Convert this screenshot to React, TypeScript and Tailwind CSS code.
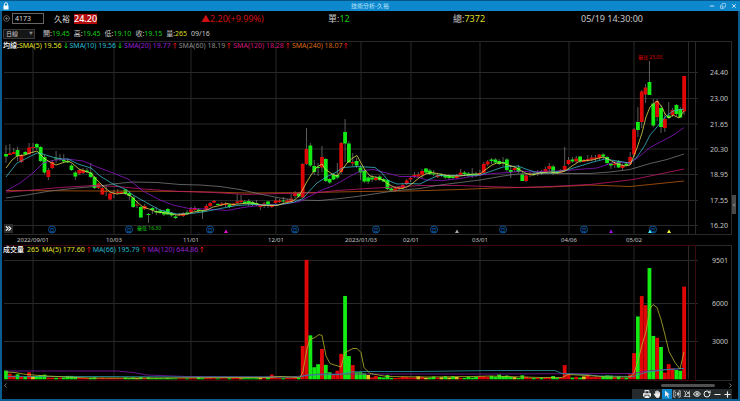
import { ChevronLeft, ChevronRight, ChevronsRight, CirclePlus, Copy, Eye, Minus, Plus, RotateCw, X } from 'lucide-react';
import type { ReactNode } from 'react';

type Candle = [dir: 'u' | 'd', high: number, top: number, bottom: number, low: number, volume: number];
type Point = [number, number];

// u = up (red), d = down (green); prices are already in chart units
const candles: Candle[] = [
  ['d', 145, 154, 156.5, 163, 700], ['u', 144, 153.5, 155, 155, 450], ['u', 148, 152, 154, 154, 300], ['d', 147, 150, 156, 161, 400],
  ['u', 154, 155, 162, 163, 200], ['d', 151, 152, 154.5, 155, 180], ['u', 143, 147.5, 154, 155, 560], ['u', 143, 147, 148, 153, 250],
  ['d', 143, 144, 147.5, 150, 250], ['d', 146, 147, 161, 162, 320], ['d', 155, 157, 172.5, 174, 370], ['u', 168, 170, 177, 180, 140],
  ['u', 160, 162, 168, 169, 130], ['d', 151, 158.5, 159.5, 163, 120], ['d', 154, 158.5, 159.5, 161, 130], ['d', 154, 160, 161.5, 163, 140],
  ['d', 159, 161, 162.5, 163, 270], ['d', 164, 165.5, 170, 171, 270], ['d', 171, 172.5, 176.5, 180, 190], ['u', 169, 170, 173.5, 175, 120],
  ['u', 168, 170, 173, 174, 100], ['d', 168, 170.5, 172, 173, 110], ['d', 163, 172.5, 177, 178, 120], ['d', 176, 177, 188, 189, 160],
  ['u', 183, 183.5, 188, 189, 100], ['u', 186, 188, 194.5, 195, 130], ['u', 185, 191, 192, 196, 90], ['u', 192, 193.5, 199.5, 200, 110],
  ['u', 190, 193, 194, 198, 100], ['u', 189, 192, 193, 194, 90], ['u', 191, 192, 193, 194, 90], ['d', 189, 189.5, 194, 195, 150],
  ['d', 191, 193, 196, 200, 110], ['d', 196, 197.5, 207, 208, 150], ['u', 201, 204.5, 205.5, 208, 90], ['d', 206, 207, 217.5, 218, 170],
  ['u', 204, 206, 209, 210, 100], ['d', 213, 214, 215, 223, 160], ['d', 207, 208, 210, 214, 90], ['d', 207, 211, 212.5, 215, 100],
  ['d', 209, 210.5, 213, 214, 90], ['d', 210, 211.5, 214.5, 216, 80], ['d', 208, 209, 214.5, 215, 110], ['d', 212, 213, 215.5, 217, 80],
  ['d', 215, 216.5, 218, 219, 70], ['u', 213, 214.5, 215.5, 216, 70], ['u', 212, 213, 216, 217, 80], ['d', 210, 212.5, 214, 215, 70],
  ['u', 207, 209.5, 212, 213, 90], ['u', 206, 208, 210, 211, 80], ['d', 208, 209.5, 211, 212, 180], ['d', 210, 210.5, 211.5, 219, 90],
  ['u', 204, 206, 210, 211, 100], ['u', 202, 203, 206, 207, 120], ['u', 200, 201, 202.5, 203, 80], ['d', 203, 204, 205, 205, 70],
  ['u', 202, 203.5, 205, 206, 80], ['u', 202, 203.5, 205, 207, 70], ['d', 204, 204.5, 207, 208, 90], ['u', 203, 203.5, 205.5, 206, 120],
  ['u', 194, 201.5, 203, 204, 110], ['u', 195, 200.5, 202, 203, 80], ['d', 200, 201.5, 203.5, 204, 90], ['d', 199, 201, 203.5, 206, 90],
  ['d', 201, 202, 204.5, 206, 80], ['d', 200, 203, 205, 206, 90], ['u', 205, 205.5, 207, 210, 100], ['u', 202, 203.5, 205, 208, 80],
  ['d', 201, 201.5, 204.5, 208, 150], ['u', 204, 204.5, 207, 208, 380], ['u', 198, 200.5, 203, 204, 160], ['u', 199, 200.5, 202, 203, 110],
  ['d', 197, 200.5, 201.5, 203, 90], ['u', 199, 200.5, 202, 202, 140], ['u', 194, 198.5, 202, 203, 120], ['u', 191, 193, 196, 198, 170],
  ['d', 192, 193, 196.5, 198, 110], ['u', 163, 164, 197.5, 198, 2650], ['u', 128, 149, 164, 165, 9501], ['d', 143, 145.5, 165.5, 167, 3500],
  ['d', 160, 166, 172, 175, 960], ['d', 163, 167, 168, 176, 1200], ['u', 146, 157, 167.5, 172, 2420], ['d', 158, 159, 181, 182, 1150],
  ['d', 178, 179, 182.5, 184, 560], ['d', 173, 175, 179.5, 180, 400], ['d', 163, 175, 177.5, 179, 680], ['u', 142, 143, 172, 174, 2020],
  ['d', 119, 132, 143.5, 162, 6630], ['d', 141, 143.5, 162.5, 163, 1850], ['u', 153, 162, 163.5, 166, 1130], ['d', 158, 161, 165.5, 168, 560],
  ['d', 165, 167.5, 172.5, 180, 560], ['d', 169, 170, 181.5, 183, 470], ['d', 176, 177.5, 181.5, 184, 350], ['d', 175, 177.5, 179.5, 182, 150],
  ['u', 176, 178, 180, 181, 260], ['d', 175, 176.5, 180, 181, 180], ['d', 178, 179, 181.5, 182, 140], ['d', 179, 180, 189, 190, 340],
  ['d', 187, 188.5, 190.5, 191, 110], ['u', 188, 188.5, 191, 192, 100], ['u', 186, 187.5, 189, 191, 120], ['u', 183, 185, 188, 189, 200],
  ['u', 179, 180.5, 184, 185, 180], ['u', 176, 178, 179.5, 182, 130], ['u', 172, 175, 177, 178, 140], ['u', 172, 174.5, 176.5, 177, 240],
  ['u', 169, 171, 175, 178, 190], ['d', 168, 168.5, 172.5, 174, 120], ['d', 169, 170.5, 174, 175, 140], ['d', 170, 173.5, 174.5, 176, 220],
  ['u', 173, 175, 177, 178, 130], ['d', 173, 174.5, 176, 177, 160], ['d', 174, 176, 177.5, 179, 240], ['d', 174, 176, 178, 180, 140],
  ['d', 175, 176.5, 178, 179, 240], ['u', 174, 176, 178, 179, 190], ['u', 169, 172.5, 175, 176, 120], ['d', 171, 172.5, 174, 176, 110],
  ['d', 172, 173.5, 175.5, 177, 190], ['d', 168, 174, 175.5, 178, 130], ['d', 172, 174, 175.5, 177, 190], ['u', 170, 173, 175, 176, 240],
  ['u', 162, 164, 173, 174, 240], ['u', 160, 161.5, 164.5, 166, 190], ['d', 158, 159.5, 161, 164, 270], ['d', 158, 159.5, 162.5, 164, 200],
  ['d', 159, 161, 164, 165, 380], ['d', 157, 162, 163, 166, 260], ['d', 158, 159.5, 170, 172, 300], ['d', 165, 170, 172, 178, 200],
  ['u', 167, 168, 170, 172, 170], ['d', 165, 167.5, 172, 173, 110], ['d', 172, 174.5, 181, 181, 320], ['u', 174, 175.5, 181, 182, 200],
  ['u', 172, 173.5, 175, 177, 120], ['d', 172, 173.5, 175, 176, 100], ['u', 170, 172, 173.5, 176, 110], ['d', 170, 171.5, 173.5, 175, 100],
  ['u', 167, 169, 172, 173, 120], ['u', 163, 166, 169, 171, 130], ['d', 165, 166.5, 173.5, 175, 260], ['d', 171, 171.5, 173, 174, 100],
  ['u', 169, 170, 172.5, 173, 130], ['u', 147, 166, 171, 172, 1130], ['u', 157, 160, 164, 165, 420], ['d', 157, 159.5, 161.5, 163, 140],
  ['u', 156, 158.5, 161.5, 163, 200], ['d', 156, 156.5, 161.5, 163, 140], ['u', 159, 160.5, 162, 162, 230], ['u', 155, 159, 161, 162, 380],
  ['u', 155, 157.5, 159.5, 161, 180], ['u', 155, 157.5, 159, 161, 190], ['u', 154, 154.5, 158, 160, 160], ['d', 153, 154.5, 156.5, 159, 260],
  ['d', 156, 157, 163, 165, 310], ['d', 163, 163.5, 165.5, 169, 290], ['u', 161, 163.5, 165, 168, 140], ['d', 160, 161, 167.5, 168, 220],
  ['u', 164, 165.5, 168, 170, 100], ['d', 162, 163.5, 165.5, 166, 120], ['u', 152, 157, 164, 165, 400], ['u', 128, 129.5, 154.5, 157, 2080],
  ['d', 107, 122, 130, 137, 5000], ['u', 90, 91.5, 122, 128, 6620], ['u', 84, 87.5, 94.5, 103, 5900], ['d', 61, 82, 95, 95, 8850],
  ['d', 99, 103.5, 125.5, 127, 3450], ['u', 99, 101, 117, 121, 3300], ['d', 105, 108, 127, 133, 2570], ['u', 113, 119, 128, 132, 530],
  ['d', 102, 115.5, 118, 119, 1200], ['u', 108, 110, 115, 117, 870], ['d', 104, 105, 114, 116, 740], ['d', 107, 109, 117.5, 118, 680],
  ['u', 76, 76, 111.5, 115, 7372],
];

// bars that are drawn in yellow in the volume panel (price unchanged)
const flatDays = [7, 34, 61, 66, 94, 107, 109, 113, 115, 117, 132, 150];
// sessions whose volume colour runs against the candle body
const redVolume = [14, 21, 85, 86, 95, 172];

const sma5: Point[] = [
  [6, 168], [12, 160], [17, 156], [25, 155], [30, 153], [37, 151], [41, 155], [45, 159], [50, 162], [56, 165], [62, 163], [68, 161], [72, 163],
  [79, 169], [87, 172], [91, 173], [95, 178], [103, 186], [110, 192], [117, 194], [125, 193], [132, 197], [137, 202], [143, 207], [149, 209],
  [157, 212], [167, 213], [177, 215], [188, 214], [191, 212.5], [199, 211], [207, 210], [213, 207], [220, 205.5], [227, 203.5], [233, 204.5],
  [243, 203.5], [253, 203], [263, 205.5], [277, 205.5], [283, 203.5], [293, 201], [299, 196], [303, 189], [307, 181.5], [311, 175], [317, 167],
  [322, 164], [325, 169], [332, 174], [337, 176], [342, 170], [347, 163], [352, 158.5], [357, 155.5], [361, 163], [365, 170], [370, 176],
  [377, 177.5], [383, 180], [388, 184], [395, 187.5], [402, 188.5], [407, 187], [413, 183], [420, 177], [427, 173.5], [432, 172.5], [440, 174],
  [450, 176], [460, 176], [473, 174], [480, 174], [485, 170], [492, 165], [497, 163], [503, 163], [508, 165], [515, 167], [520, 170], [525, 173],
  [532, 175], [540, 173], [550, 172], [557, 173], [565, 171], [572, 166], [580, 161], [592, 160], [603, 157], [610, 160], [617, 164], [625, 166],
  [630, 165], [633, 158], [637, 148], [642, 133], [646, 117], [650, 107], [657, 101], [662, 107], [665, 114], [669, 118], [673, 115], [679, 118], [684, 111],
];
const sma10: Point[] = [
  [6, 177], [17, 163], [25, 159], [37, 153], [43, 154], [52, 157], [62, 159], [68, 159], [78, 164], [91, 168], [100, 176], [113, 184], [125, 189],
  [133, 195], [147, 203], [160, 210], [177, 214], [191, 213.5], [203, 212], [213, 210], [223, 208], [237, 205.5], [253, 204.5], [277, 205],
  [293, 202.5], [303, 198.5], [308, 192.5], [317, 183], [327, 176.5], [335, 173], [343, 167.5], [357, 166.5], [375, 167.5], [382, 173], [388, 180.5],
  [397, 184], [410, 183.5], [420, 184], [428, 180], [438, 175.5], [453, 175.5], [480, 175], [493, 170.5], [503, 167], [518, 166], [527, 169.5],
  [537, 172.5], [550, 173], [567, 170], [580, 166], [593, 162], [605, 159], [617, 161], [630, 163], [637, 157], [645, 145], [650, 135], [657, 127],
  [665, 117], [673, 111], [684, 109],
];
const sma20: Point[] = [
  [6, 191], [20, 183], [33, 173], [43, 163], [55, 160], [67, 159], [83, 161], [97, 167], [113, 173], [128, 179], [143, 191], [160, 200], [173, 205],
  [189, 208.5], [207, 209], [227, 210.5], [243, 207.5], [260, 205.5], [280, 204.5], [300, 201.5], [308, 197], [323, 189.5], [333, 186], [347, 178],
  [360, 171], [373, 169.5], [387, 173], [400, 176.5], [415, 176.5], [427, 180], [443, 180.5], [460, 178.5], [477, 175.5], [493, 173.5], [510, 172.5],
  [520, 171], [533, 172], [550, 171], [563, 171], [577, 169.5], [597, 168], [613, 162.5], [630, 163], [638, 157.5], [650, 147.5], [667, 138.5],
  [675, 134], [684, 127.5],
];
const sma60: Point[] = [
  [6, 198], [27, 195], [50, 191], [77, 188], [100, 186], [117, 183.5], [133, 182], [157, 182.5], [180, 184.5], [200, 185], [220, 186.5], [240, 189.5],
  [260, 194], [277, 197.5], [293, 200], [320, 200.5], [340, 198.5], [357, 196.5], [380, 193], [397, 190.5], [420, 188.5], [440, 185], [460, 182.5],
  [480, 180], [503, 176], [517, 174], [550, 173.5], [570, 173.5], [590, 173.5], [610, 172], [630, 169.5], [650, 163.5], [667, 159.5], [684, 154],
];
const sma120: Point[] = [
  [6, 192], [33, 190], [60, 187.5], [93, 185.5], [117, 186.5], [143, 189], [180, 191.5], [213, 192.5], [247, 194.5], [280, 193.5], [313, 193],
  [337, 190.5], [360, 189], [393, 187], [420, 185.5], [460, 185.5], [487, 186.5], [520, 187.5], [550, 186.5], [590, 184.5], [617, 181.5],
  [633, 179.5], [650, 176], [667, 172.5], [684, 169],
];
const sma240: Point[] = [
  [6, 190.5], [100, 191], [190, 191.5], [247, 193], [313, 192.5], [360, 191.5], [410, 191], [460, 189.5], [493, 188], [550, 187], [590, 185],
  [630, 186.5], [650, 184.5], [684, 181],
];

const volMa5: Point[] = [
  [6, 372], [15, 372.5], [23, 374], [33, 375], [47, 376], [67, 377], [90, 378], [150, 378], [240, 377.5], [267, 377.5], [280, 376.5], [300, 377.5],
  [303, 371.5], [307, 348.5], [310, 339.5], [315, 337.5], [319, 334.5], [322, 335.5], [326, 356], [330, 363.5], [341, 367], [345, 352.5], [349, 350.5],
  [353, 348.5], [357, 348.5], [361, 352.5], [364, 367.5], [370, 373.5], [387, 376.5], [427, 377], [473, 376.5], [490, 376], [540, 377.5], [562, 377.5],
  [568, 374.5], [587, 375.5], [607, 377], [630, 377], [634, 373.5], [638, 360.5], [642, 345], [646, 331.5], [650, 308.5], [653, 304.5], [657, 307.5],
  [661, 319.5], [665, 335], [669, 351.5], [675, 362.5], [680, 369], [684, 352],
];
const volMa66: Point[] = [
  [6, 376.5], [100, 376.5], [190, 377], [300, 377], [307, 375], [340, 374.5], [350, 372], [363, 371.5], [420, 371.5], [490, 370.5], [555, 370.5],
  [562, 373.5], [583, 374.5], [600, 376], [633, 376.5], [647, 372], [667, 369.5], [684, 368.5],
];
const volMa120: Point[] = [
  [6, 371], [117, 371], [133, 372.5], [147, 375], [187, 376.5], [290, 377], [307, 375.5], [320, 374], [490, 374], [633, 373.5], [647, 371], [667, 369.5], [684, 368.5],
];

const dates: [string, number][] = [
  ['2022/09/01', 33], ['10/03', 114], ['11/01', 191], ['12/01', 276], ['2023/01/03', 361], ['02/01', 411], ['03/01', 480], ['04/06', 569], ['05/02', 634],
];
const prices: [string, number][] = [
  ['24.40', 72.5], ['23.00', 98.5], ['21.65', 124], ['20.30', 149], ['18.95', 174.5], ['17.55', 200.5], ['16.20', 225.5],
];
const volumes: [string, number][] = [['9501', 260.5], ['6000', 303.5], ['3000', 341.5]];
const months = [52, 129, 210, 295, 376, 434, 503, 584, 653];
const events: [number, string][] = [[226, '#e010d0'], [457, '#aaaaaa'], [611, '#a010e0'], [650, '#40e0f0'], [669, '#f0f040']];

const xOf = (i: number) => 6 + i * 3.853;
const toPoints = (pts: Point[]) => pts.map((p) => p.join(',')).join(' ');

function Line({ data, color }: { data: Point[]; color: string }) {
  return <polyline points={toPoints(data)} fill="none" stroke={color} strokeWidth={0.8} strokeLinejoin="round" />;
}

function PriceChart() {
  return (
    <svg viewBox="2 41 736 204" className="block w-full" role="img" aria-label="K線圖">
      <g stroke="#292929" strokeWidth={1}>
        <path d="M4 41.5H732M4 234.5H732" />
        {prices.map(([label, y]) => <path key={label} d={`M4 ${y}H698`} />)}
        {dates.map(([label, x]) => <path key={label} d={`M${x} 41V235`} />)}
        <path d="M688.5 41V235M695.5 41V235M731.5 41V235" />
      </g>
      {candles.map(([dir, high, top, bottom, low], i) => (
        <g key={i}>
          <path d={`M${xOf(i)} ${high}V${low}`} stroke="#999" strokeWidth={0.6} />
          <rect x={xOf(i) - 1.9} y={top} width={3.8} height={bottom - top} fill={dir === 'u' ? '#e00606' : '#14ea14'} />
        </g>
      ))}
      <Line data={sma240} color="#b8590b" />
      <Line data={sma120} color="#c0186c" />
      <Line data={sma60} color="#767676" />
      <Line data={sma20} color="#8c14c4" />
      <Line data={sma10} color="#38b4c8" />
      <Line data={sma5} color="#dcd850" />
      <g fontSize={7} fill="#c4c4c4">
        {prices.map(([label, y]) => <text key={label} x={728} y={y + 2.5} textAnchor="end">{label}</text>)}
      </g>
      <g fontSize={6} fill="#c4c4c4" textAnchor="middle">
        {dates.map(([label, x]) => <text key={label} x={x} y={241.5}>{label}</text>)}
      </g>
      {months.map((x) => (
        <g key={x}>
          <circle cx={x} cy={229.5} r={3.5} fill="none" stroke="#0a59a0" strokeWidth={0.9} />
          <text x={x} y={231.5} fontSize={5} fill="#0c6fc8" textAnchor="middle">月</text>
        </g>
      ))}
      {events.map(([x, color]) => <path key={x} d={`M${x} 229.5l2 3.5h-4z`} fill={color} />)}
      <text x={638} y={59} fontSize={5} fill="#d80000">最高 25.00</text>
      <text x={137} y={230} fontSize={5} fill="#10c810">最低 16.30</text>
    </svg>
  );
}

function VolumeChart() {
  return (
    <svg viewBox="2 245 736 136" className="block w-full" role="img" aria-label="成交量">
      <g stroke="#292929" strokeWidth={1}>
        {volumes.map(([label, y]) => <path key={label} d={`M4 ${y}H698`} />)}
        {dates.map(([label, x]) => <path key={label} d={`M${x} 246V379`} />)}
        <path d="M688.5 246V379M731.5 246V380M696 245.5H732M696 380.5H732" />
      </g>
      <path d="M4 245.5H695.5V380.5H4" fill="none" stroke="#3d0a12" />
      {candles.map(([dir, , , , , volume], i) => {
        const h = volume * 0.01257;
        const up = dir === 'u' || redVolume.includes(i);
        return (
          <rect key={i} x={xOf(i) - 1.9} y={379.3 - h} width={3.8} height={h} fill={flatDays.includes(i) ? '#e8c020' : up ? '#e00606' : '#14ea14'} />
        );
      })}
      <Line data={volMa120} color="#7d18a8" />
      <Line data={volMa66} color="#2797a8" />
      <Line data={volMa5} color="#b8b428" />
      <g fontSize={7} fill="#c4c4c4" textAnchor="end">
        {volumes.map(([label, y]) => <text key={label} x={728} y={y + 2.5}>{label}</text>)}
      </g>
    </svg>
  );
}

function Trend({ up }: { up: boolean }) {
  return (
    <svg viewBox="0 0 4 7" className={`h-[7px] w-1 ${up ? 'text-[#e01010]' : 'text-[#10c810]'}`} fill="none" stroke="currentColor" strokeWidth={0.9}>
      <path d={up ? 'M2 6.500V1M0.500 2.500L2 1l1.500 1.500' : 'M2 0.500V6M0.500 4.500L2 6l1.500-1.500'} />
    </svg>
  );
}

function Average({ text, up = true, className }: { text: string; up?: boolean; className: string }) {
  return (
    <span className={`mr-0.5 flex items-center gap-0.5 ${className}`}>
      {text}
      <Trend up={up} />
    </span>
  );
}

function Legend({ children }: { children: ReactNode }) {
  return <div className="absolute left-px top-0 flex h-[9px] items-center whitespace-nowrap text-[7px] leading-[9px]">{children}</div>;
}

function Quote({ label, value, className }: { label: string; value: string; className: string }) {
  return (
    <span className="text-[#c8c8c8]">
      {label}:<span className={className}>{value}</span>
    </span>
  );
}

const tools: { name: string; icon: ReactNode }[] = [
  { name: '儲存', icon: null },
  {
    name: '列印',
    icon: (
      <svg viewBox="0 0 10 10" className="size-2" fill="currentColor">
        <path d="M2 0h5l1 1v3H7V1.500H3V4H2zM0 4h10v4H8V6H2v2H0zM3 7h4v1h1v2H2V8h1z" />
      </svg>
    ),
  },
  {
    name: '移動',
    icon: (
      <svg viewBox="0 0 10 10" className="size-2" fill="none" stroke="currentColor" strokeWidth={1.3} strokeLinecap="round">
        <path d="M3.500 5V2M5 5V1M6.500 5V1.500M8 5.500V3M3.200 7L1.500 5" />
        <path d="M3.500 5H8v2L7 9H4.500L3 7z" fill="currentColor" />
      </svg>
    ),
  },
  {
    name: '選取',
    icon: (
      <svg viewBox="0 0 10 10" className="size-2" fill="currentColor">
        <path d="M2.500 0.500L8.500 6H6l1.500 3-1.300 0.700L4.700 6.700 2.500 8.500z" />
      </svg>
    ),
  },
  {
    name: '查價',
    icon: (
      <svg viewBox="0 0 10 10" className="size-2" fill="none" stroke="currentColor" strokeWidth={0.9}>
        <path d="M3 1H1v8h2M7 1h2v8H7M2.500 3H4M2.500 5H4M2.500 7H4M6.500 2v6M5.500 4h2v2h-2z" />
      </svg>
    ),
  },
  {
    name: '畫線',
    icon: (
      <svg viewBox="0 0 10 10" className="size-2" fill="none" stroke="currentColor" strokeWidth={0.9}>
        <path d="M1 1l2 2 2-2M3 3v5M1 8h8M8 1v8M4 6l3-3M5 3h2v2" />
      </svg>
    ),
  },
  { name: '顯示', icon: <Eye size={8} strokeWidth={3} /> },
  { name: '重新整理', icon: <RotateCw size={8} strokeWidth={3} /> },
  { name: '縮小', icon: <Minus size={9} strokeWidth={3} /> },
  { name: '放大', icon: <Plus size={9} strokeWidth={3} /> },
];

export default function App() {
  return (
    <div className="border-x-2 border-b-2 border-[#0b5d90] bg-black font-['Noto_Sans','Noto_Sans_CJK_TC',sans-serif] text-[#c8c8c8]">
      <header className="-mx-0.5 grid h-[11px] grid-cols-[1fr_auto_1fr] items-center border-t border-[#07568a] bg-[#0d88cd] px-0.5 text-white">
        <svg viewBox="0 0 6 8" className="ml-px h-2 w-1.5" fill="currentColor">
          <path d="M0.500 3.500h5V7.500h-5z" />
          <path d="M1.500 4V2.200a1.500 1.500 0 0 1 3 0V4" fill="none" stroke="currentColor" strokeWidth={0.9} />
        </svg>
        <h1 className="text-[6px] leading-[9px] text-[#b5e2fa]">技術分析-久裕</h1>
        <div className="flex items-center justify-end gap-1 pr-px">
          <button aria-label="最小化"><Minus size={6} strokeWidth={3} className="block" /></button>
          <button aria-label="還原"><Copy size={6} strokeWidth={2} className="mx-px block -scale-y-100" /></button>
          <button aria-label="關閉"><X size={6} strokeWidth={3} className="block" /></button>
        </div>
      </header>

      <div className="grid h-[15px] grid-cols-[199fr_127fr_125fr_128fr_157fr] items-center whitespace-nowrap text-[9px] leading-[12px]">
        <div className="flex items-center pl-px">
          <button aria-label="新增" className="mr-0.5 text-[#999]"><CirclePlus size={7} className="block" /></button>
          <input
            aria-label="股票代號"
            defaultValue="4173"
            className="h-[11px] w-8 border border-[#666] bg-black px-0.5 text-[7px] leading-[9px] text-[#ddd] outline-none"
          />
          <span className="ml-2.5 text-[8px] text-[#ddd]">久裕</span>
          <span className="ml-1 bg-[#b80c0c] leading-[10px] font-medium text-white">24.20</span>
        </div>
        <div className="text-[#d01010]">▲2.20(+9.99%)</div>
        <div><Quote label="單" value="12" className="text-[#10d010]" /></div>
        <div><Quote label="總" value="7372" className="text-[#dede28]" /></div>
        <div>05/19 14:30:00</div>
      </div>

      <div className="flex h-[15px] items-center gap-1 pl-px text-[7px] leading-[9px]">
        <label className="relative mr-1 flex items-center">
          <select aria-label="週期" className="h-[10px] w-8 appearance-none border border-[#3a3a3a] bg-[#161616] pl-0.5 text-[6px] leading-[8px] text-[#ccc]">
            <option>日線</option>
          </select>
          <span className="pointer-events-none absolute right-0.5 text-[4px] leading-[4px] text-[#888]">▼</span>
        </label>
        <Quote label="開" value="19.45" className="text-[#10d010]" />
        <Quote label="高" value="19.45" className="text-[#10d010]" />
        <Quote label="低" value="19.10" className="text-[#10d010]" />
        <Quote label="收" value="19.15" className="text-[#10d010]" />
        <Quote label="量" value="265" className="text-[#dede28]" />
        <span>09/16</span>
      </div>

      <main>
        <section className="relative">
          <PriceChart />
          <Legend>
            <span className="font-medium text-white">均線:</span>
            <Average text="SMA(5) 19.56" up={false} className="text-[#e2e228]" />
            <Average text="SMA(10) 19.56" up={false} className="text-[#28bcd2]" />
            <Average text="SMA(20) 19.77" className="text-[#9420d0]" />
            <Average text="SMA(60) 18.19" className="text-[#8a8a8a]" />
            <Average text="SMA(120) 18.28" className="text-[#d0187c]" />
            <Average text="SMA(240) 18.07" className="text-[#d86a14]" />
          </Legend>
          <button aria-label="展開" className="absolute bottom-3 left-0.5 bg-[#2c2c2c] text-white">
            <ChevronsRight size={9} strokeWidth={3} className="block" />
          </button>
          <button aria-label="側欄" className="absolute top-[154px] right-0.5 flex h-[19px] w-1 items-center justify-center bg-[#4a4a4a] text-white">
            <ChevronLeft size={4} strokeWidth={3} />
          </button>
        </section>

        <section className="relative">
          <VolumeChart />
          <Legend>
            <span className="mr-[3px] font-medium text-white">成交量</span>
            <span className="mr-[3px] text-[#e2e228]">265</span>
            <Average text="MA(5) 177.60" className="text-[#e2e228]" />
            <Average text="MA(66) 195.79" className="text-[#28bcd2]" />
            <Average text="MA(120) 644.86" className="text-[#9420d0]" />
          </Legend>
        </section>
      </main>

      <div className="flex h-2 items-center justify-between pr-1 text-[#ccc]">
        <button aria-label="向左捲動"><ChevronLeft size={7} className="block" /></button>
        <div className="mr-3 ml-auto h-[3px] w-[54px] rounded-full bg-[#505050]" />
        <button aria-label="向右捲動"><ChevronRight size={7} className="block" /></button>
      </div>
      <div className="flex h-2.5 justify-end pr-1.5">
        {tools.map((tool) => (
          <button
            key={tool.name}
            aria-label={tool.name}
            className={`flex size-2.5 items-center justify-center text-[#eee] ${tool.name === '選取' ? 'bg-[#0d88cd]' : 'bg-[#252a2d]'}`}
          >
            {tool.icon}
          </button>
        ))}
      </div>
    </div>
  );
}
